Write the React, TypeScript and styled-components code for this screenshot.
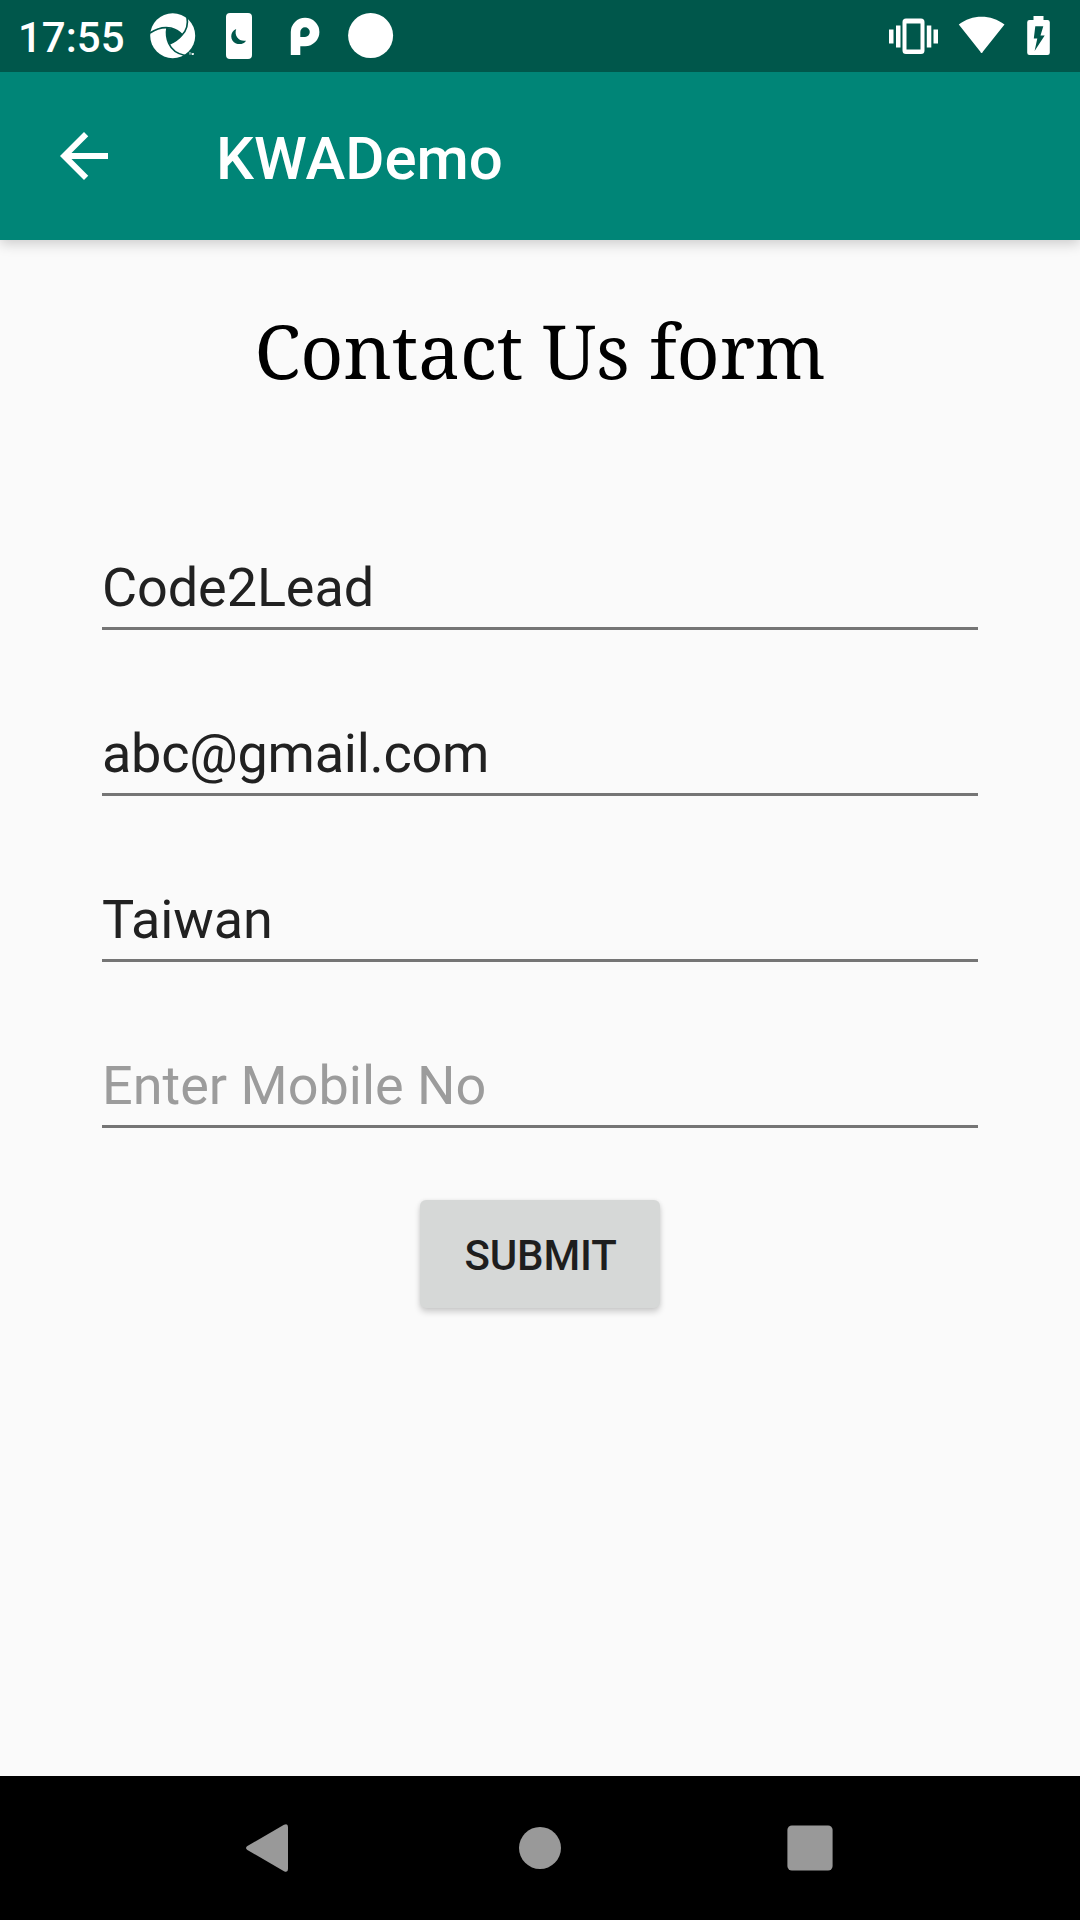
import React from "react";
import styled, { createGlobalStyle } from "styled-components";

const GlobalStyle = createGlobalStyle`
  html, body { margin: 0; padding: 0; background: #fafafa; }
  * { box-sizing: border-box; }
`;

const Screen = styled.div`
  width: 1080px;
  height: 1920px;
  display: flex;
  flex-direction: column;
  background: #fafafa;
  font-family: Roboto, "Liberation Sans", sans-serif;
  overflow: hidden;
`;

const StatusBar = styled.header`
  height: 72px;
  flex: none;
  display: flex;
  align-items: flex-start;
  justify-content: space-between;
  background: #00574b;
  color: #fff;
`;

const StatusGroup = styled.div`
  display: flex;
  align-items: flex-start;
  height: 72px;
`;

const Clock = styled.span`
  width: 130px;
  margin-left: 18px;
  font-size: 42px;
  font-weight: 500;
  line-height: 76px;
  white-space: nowrap;
`;

const Glyph = styled.svg`
  display: block;
  flex: none;
`;

const Toolbar = styled.div`
  height: 168px;
  flex: none;
  display: flex;
  align-items: center;
  background: #008577;
  color: #fff;
  box-shadow: 0 4px 12px rgba(0, 0, 0, 0.18);
  clip-path: inset(0 0 -24px 0);
`;

const BackButton = styled.button`
  width: 168px;
  height: 168px;
  padding: 0;
  border: 0;
  background: none;
  color: inherit;
  display: flex;
  align-items: center;
  justify-content: center;
`;

const AppTitle = styled.h1`
  margin: 0 0 0 48px;
  font-size: 60px;
  font-weight: 500;
  line-height: 70px;
  padding-top: 5px;
`;

const Content = styled.main`
  flex: 1;
  display: flex;
  flex-direction: column;
  align-items: center;
`;

const Heading = styled.h2`
  margin: 59px 0 0;
  height: 102px;
  line-height: 102px;
  font-family: "Noto Serif", "DejaVu Serif Condensed", "DejaVu Serif", serif;
  font-size: 75px;
  font-weight: 400;
  letter-spacing: -0.15px;
  color: #000;
  white-space: nowrap;
`;

const Form = styled.form`
  width: 876px;
  margin-top: 129px;
  display: flex;
  flex-direction: column;
  align-items: center;
`;

const Fields = styled.div`
  width: 100%;
  display: flex;
  flex-direction: column;
  gap: 66px;
`;

const Field = styled.input<{ $tracking: number }>`
  display: block;
  width: 100%;
  height: 100px;
  padding: 25px 0 8px;
  border: 0;
  border-bottom: 3px solid #757575;
  border-radius: 0;
  outline: 0;
  background: transparent;
  color: #212121;
  font-family: inherit;
  font-size: 54px;
  line-height: 64px;
  letter-spacing: ${(p) => p.$tracking}px;

  &::placeholder {
    color: #9c9c9c;
    opacity: 1;
  }
`;

const Submit = styled.button`
  width: 240px;
  height: 108px;
  margin-top: 72px;
  padding: 4px 0 0 1px;
  border: 0;
  border-radius: 6px;
  background: #d6d8d7;
  color: #1e1e1e;
  font-family: inherit;
  font-size: 42px;
  font-weight: 500;
  letter-spacing: -0.15px;
  line-height: 50px;
  box-shadow: 0 4px 6px rgba(0, 0, 0, 0.18), 0 0 4px rgba(0, 0, 0, 0.06);
`;

const NavBar = styled.nav`
  height: 144px;
  flex: none;
  display: flex;
  align-items: center;
  justify-content: center;
  gap: 126px;
  background: #000;
  color: #999;
`;

const NavButton = styled.button`
  width: 144px;
  height: 144px;
  padding: 0;
  border: 0;
  background: none;
  color: inherit;
  display: flex;
  align-items: center;
  justify-content: center;
`;

const FIELDS = [
  { name: "name", value: "Code2Lead", tracking: -0.1 },
  { name: "email", value: "abc@gmail.com", tracking: -0.25 },
  { name: "country", value: "Taiwan", tracking: -0.15 },
  { name: "mobile", value: "", hint: "Enter Mobile No", tracking: 0 },
];

const NotificationIcons = () => (
  <Glyph width="260" height="72" viewBox="148 0 260 72" fill="#fff">
    <circle cx="172.700" cy="35.700" r="22.500" />
    <path d="M167 28Q176 28 182.500 34.500Q178 41 169.500 44Q165 36 167 28Z" fill="#00574b" />
    <g fill="none" stroke="#00574b" strokeWidth="1.700">
      <path d="M150 33Q160 26 171 28Q178 30 182.500 35" />
      <path d="M187 17Q189 28 182 35Q177 41 169.500 44" />
      <path d="M185 55.500Q173 53 168.800 43.500Q165.500 36 167 28" />
    </g>
    <path d="M189 52.800h2.200M190 53v2M192 55v-2l.7 1 .7-1v2" stroke="#fff" strokeWidth=".6" />
    <path
      fillRule="evenodd"
      d="M230 13h18a4 4 0 0 1 4 4v38a4 4 0 0 1-4 4h-18a4 4 0 0 1-4-4V17a4 4 0 0 1 4-4ZM236.200 29C229.500 31.500 229.800 41 236 43.500C240 45 244.500 43.500 246 40.700C239 41.800 233.800 36 236.200 29Z"
    />
    <path
      fillRule="evenodd"
      d="M290.800 55V32a14.300 14.300 0 1 1 14.300 14.300h-4.800V55ZM305 27.300a4.700 4.700 0 0 0-4.700 4.700v4.900h4.700a4.800 4.800 0 0 0 0-9.600Z"
    />
    <circle cx="370.600" cy="35.600" r="22.500" />
  </Glyph>
);

const SystemIcons = () => (
  <Glyph width="200" height="72" viewBox="880 0 200 72" fill="#fff">
    <path
      fillRule="evenodd"
      d="M906 18.500h15a3.500 3.500 0 0 1 3.500 3.500v28.500a3.500 3.500 0 0 1-3.500 3.500h-15a3.500 3.500 0 0 1-3.500-3.500V22a3.500 3.500 0 0 1 3.500-3.500ZM906.500 23.500v26h14v-26Z"
    />
    <path d="M889 29.500h4.500v14H889ZM896 25.500h4.500v22H896ZM926.800 25.500h4.500v22h-4.500ZM933.500 29.500h4.500v14h-4.500Z" />
    <path d="M958.800 24.500C972 14 991 14 1004.500 24.500L983 51.500Q981.600 54.500 980.200 51.500Z" />
    <path
      fillRule="evenodd"
      d="M1033.500 16h10v4h4a2.300 2.300 0 0 1 2.300 2.300v30.500a2.300 2.300 0 0 1-2.300 2.300h-18a2.300 2.300 0 0 1-2.300-2.300V22.300a2.300 2.300 0 0 1 2.300-2.300h4ZM1035.300 26.200H1043.300L1040.500 35.500H1044.700L1034.600 51L1037.300 38.500H1033.800Z"
    />
  </Glyph>
);

export default function App() {
  return (
    <>
      <GlobalStyle />
      <Screen>
        <StatusBar>
          <StatusGroup>
            <Clock>17:55</Clock>
            <NotificationIcons />
          </StatusGroup>
          <SystemIcons />
        </StatusBar>
        <Toolbar>
          <BackButton aria-label="Back">
            <Glyph width="72" height="72" viewBox="0 0 24 24" fill="currentColor">
              <path d="M20 11H7.830l5.590-5.590L12 4l-8 8 8 8 1.410-1.410L7.830 13H20v-2z" />
            </Glyph>
          </BackButton>
          <AppTitle>KWADemo</AppTitle>
        </Toolbar>
        <Content>
          <Heading>Contact Us form</Heading>
          <Form onSubmit={(e) => e.preventDefault()}>
            <Fields>
              {FIELDS.map((f) => (
                <Field
                  key={f.name}
                  name={f.name}
                  defaultValue={f.value}
                  placeholder={f.hint}
                  spellCheck={false}
                  $tracking={f.tracking}
                />
              ))}
            </Fields>
            <Submit type="submit">SUBMIT</Submit>
          </Form>
        </Content>
        <NavBar>
          <NavButton aria-label="Back">
            <Glyph width="48" height="48" viewBox="0 0 48 48" fill="currentColor">
              <path d="M1.400 22L38 .8Q42 -1 42 3V45Q42 49 38 47.200L1.400 26Q-1.400 24 1.400 22Z" />
            </Glyph>
          </NavButton>
          <NavButton aria-label="Home">
            <Glyph width="42" height="42" viewBox="0 0 42 42" fill="currentColor">
              <circle cx="21" cy="21" r="21" />
            </Glyph>
          </NavButton>
          <NavButton aria-label="Recents">
            <Glyph width="46" height="46" viewBox="0 0 46 46" fill="currentColor">
              <rect x=".4" y=".4" width="45.200" height="45.200" rx="4.500" />
            </Glyph>
          </NavButton>
        </NavBar>
      </Screen>
    </>
  );
}
